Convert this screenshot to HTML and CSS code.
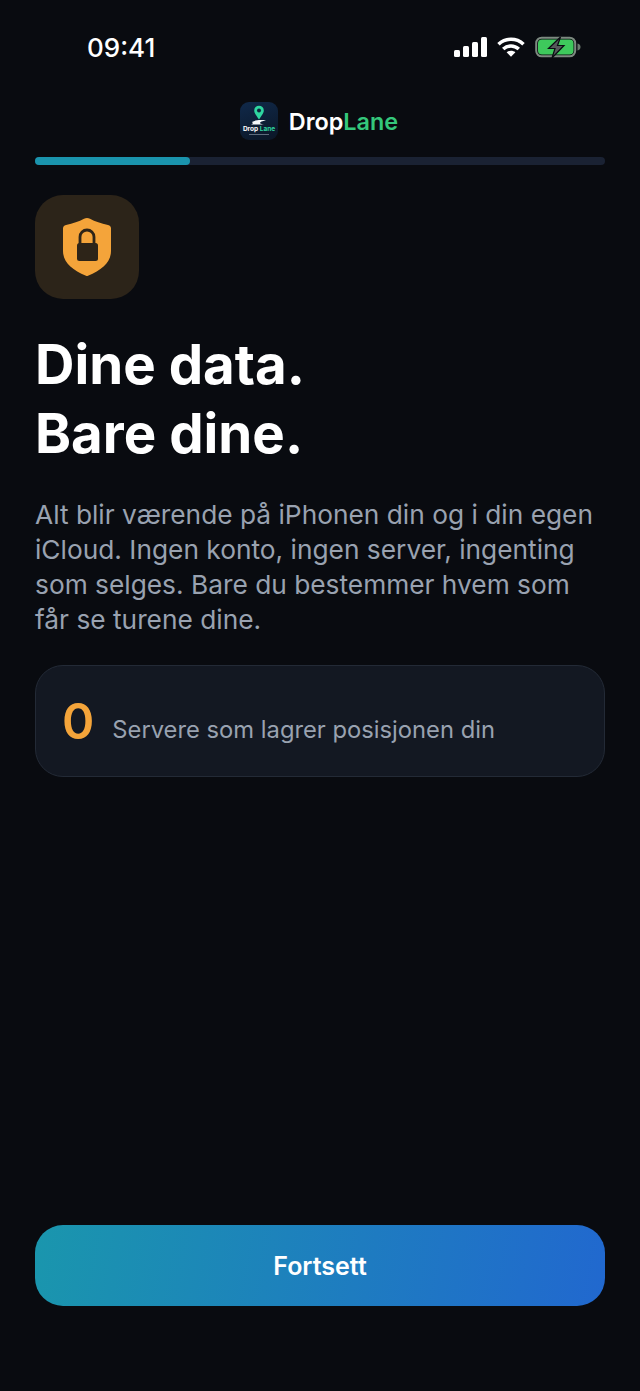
FILE: index.html
```html
<!DOCTYPE html>
<html lang="nb">
<head>
    <meta charset="UTF-8">
    <meta name="viewport" content="width=device-width, initial-scale=1.0">
    <title>DropLane</title>
    <link rel="stylesheet" href="styles.css">
</head>
<body>
    <div class="screen">
        <div class="status-bar">
            <span class="clock">09:41</span>
            <div class="status-icons">
                <svg class="signal" width="33" height="20" viewBox="0 0 33 20"><rect x="0" y="13" width="6" height="7" rx="1.5" fill="#fff"/><rect x="9" y="9" width="6" height="11" rx="1.5" fill="#fff"/><rect x="18" y="5" width="6" height="15" rx="1.5" fill="#fff"/><rect x="27" y="0" width="6" height="20" rx="1.5" fill="#fff"/></svg>
                <svg class="wifi" width="28" height="20" viewBox="0 0 28 20" fill="none" stroke="#fff" stroke-width="3.6"><path d="M1.5 7.2C8.6 .6 19.4 .6 26.5 7.2"/><path d="M6.2 12C10.8 7.9 17.2 7.9 21.8 12"/><path d="M14 19.8l-4.4-4.6c2.5-2 6.3-2 8.8 0z" fill="#fff" stroke="none"/></svg>
                <svg class="battery" width="46" height="22" viewBox="0 0 46 22"><rect x="1.2" y="1.7" width="39" height="18.6" rx="5.5" fill="none" stroke="#7d8a80" stroke-width="2"/><rect x="3" y="3.500" width="35.500" height="15" rx="4" fill="#3ec95c"/><path d="M42.500 7.500c2 .5 3 1.800 3 3.500s-1 3-3 3.500z" fill="#6b7a6f"/><path d="M25.500 1L13.500 12.500h6.500L17 22l12-12.500h-6.500z" fill="#55595a" stroke="#0a0c12" stroke-width="1.200"/></svg>
            </div>
        </div>

        <div class="brand">
            <div class="brand-logo">
                <svg width="38" height="38" viewBox="0 0 38 38">
                    <path d="M19 17.500c-3-4.500-4.800-6.500-4.800-9a4.800 4.800 0 0 1 9.600 0c0 2.500-1.800 4.500-4.800 9z" fill="#2fd6a0"/>
                    <circle cx="19" cy="8.500" r="2" fill="#10233d"/>
                    <path d="M12 20c3-2 9-2.500 14-1.500-4 .6-6 1.400-6 2.600 0 .8 1.500 1 4 1.400H9c3 0 5-.8 3-2.500z" fill="#f4f7fa"/>
                    <text x="19" y="29" class="brand-logo-text">Drop <tspan fill="#2fd6a0">Lane</tspan></text>
                    <rect x="9" y="32" width="20" height="1" fill="#5d6b7c"/>
                </svg>
            </div>
            <span class="brand-name">Drop<span class="brand-accent">Lane</span></span>
        </div>

        <div class="progress"><div class="progress-fill"></div></div>

        <div class="icon-tile">
            <svg width="48" height="58" viewBox="0 0 48 58">
                <path d="M24 0c1 0 2 .3 3 .8C32 3.500 38 5.500 45 7c2 .4 3 1.500 3 3.500V33c0 11-9 19-23 24.700-.7.3-1.300.3-2 0C9 52 0 44 0 33V10.500c0-2 1-3.100 3-3.500C10 5.500 16 3.500 21 .8c1-.5 2-.8 3-.8z" fill="#f4a43a"/>
                <path d="M17 26v-7a7 7 0 0 1 14 0v7" fill="none" stroke="#2d2418" stroke-width="2.800"/>
                <rect x="14" y="25" width="21" height="18" rx="2.500" fill="#2d2418"/>
            </svg>
        </div>

        <h1 class="title">Dine data.<br>Bare dine.</h1>
        <p class="lead">Alt blir værende på iPhonen din og i din egen iCloud. Ingen konto, ingen server, ingenting som selges. Bare du bestemmer hvem som får se turene dine.</p>

        <div class="stat-card">
            <span class="stat-value">0</span>
            <span class="stat-label">Servere som lagrer posisjonen din</span>
        </div>

        <button class="continue">Fortsett</button>
    </div>
</body>
</html>
```

FILE: styles.css
```css
html, body {
    margin: 0;
    height: 100%;
}

body {
    font-family: Inter, 'Liberation Sans', sans-serif;
    background-color: #090b10;
    color: #fff;
}

.screen {
    display: flex;
    flex-direction: column;
    height: 1391px;
    box-sizing: border-box;
    padding: 0 35px 85px;
}

.status-bar {
    display: flex;
    justify-content: space-between;
    align-items: center;
    height: 94px;
    padding: 0 24px 0 52px;
}

.clock {
    font-size: 26px;
    font-weight: 500;
}

.status-icons {
    display: flex;
    align-items: center;
    gap: 10px;
}

.brand {
    display: flex;
    justify-content: center;
    align-items: center;
    gap: 11px;
    height: 54px;
    padding: 0 2px 9px 0;
}

.brand-logo {
    width: 38px;
    height: 38px;
    border-radius: 9px;
    background: linear-gradient(160deg, #10294a, #0b1626);
    overflow: hidden;
}

.brand-logo-text {
    font-size: 6.500px;
    font-weight: 700;
    fill: #fff;
    text-anchor: middle;
}

.brand-name {
    font-size: 23.400px;
    font-weight: 600;
}

.brand-accent {
    color: #34c77b;
}

.progress {
    flex: none;
    height: 8px;
    border-radius: 4px;
    background-color: #1a2233;
}

.progress-fill {
    width: 155px;
    height: 8px;
    border-radius: 4px;
    background-color: #1a94ad;
}

.icon-tile {
    display: flex;
    flex: none;
    align-items: center;
    justify-content: center;
    width: 104px;
    height: 104px;
    margin-top: 30px;
    border-radius: 28px;
    background-color: #2c2419;
}

.title {
    margin: 31px 0 0;
    font-size: 54.600px;
    font-weight: 700;
    line-height: 69px;
}

.lead {
    margin: 29px 0 0;
    font-size: 26.300px;
    line-height: 35px;
    color: #99a2b0;
}

.stat-card {
    display: flex;
    flex: none;
    align-items: center;
    gap: 18px;
    height: 112px;
    box-sizing: border-box;
    margin-top: 28px;
    padding: 0 26px;
    border: 1px solid #232a36;
    border-radius: 28px;
    background-color: #131822;
}

.stat-value {
    font-size: 49px;
    font-weight: 600;
    color: #f4a43a;
}

.stat-label {
    font-size: 23.750px;
    color: #99a2b0;
    padding-top: 16px;
}

.continue {
    flex: none;
    height: 81px;
    margin-top: auto;
    border: 0;
    border-radius: 28px;
    background: linear-gradient(100deg, #1a96ad, #2168cf);
    color: #fff;
    font-family: inherit;
    font-size: 25px;
    font-weight: 600;
}
```
